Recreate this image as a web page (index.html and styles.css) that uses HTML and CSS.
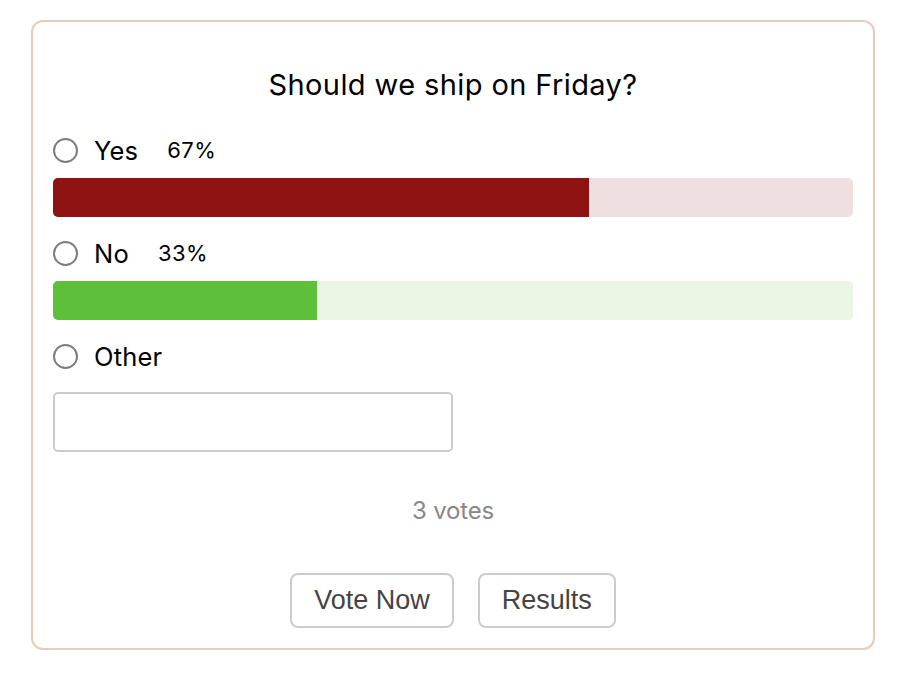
FILE: index.html
```html
<!DOCTYPE html>
<html lang="en">
<head>
<meta charset="utf-8">
<title>Poll</title>
<link rel="stylesheet" href="styles.css">
</head>
<body>
<div class="card">
  <h1 class="title">Should we ship on Friday?</h1>
  <div class="option">
    <span class="radio"></span>
    <span class="label">Yes</span>
    <span class="pct">67%</span>
  </div>
  <div class="bar bar-red"><div class="fill" style="width:67%"></div></div>
  <div class="option">
    <span class="radio"></span>
    <span class="label">No</span>
    <span class="pct">33%</span>
  </div>
  <div class="bar bar-green"><div class="fill" style="width:33%"></div></div>
  <div class="option">
    <span class="radio"></span>
    <span class="label">Other</span>
  </div>
  <input class="other-input" type="text">
  <div class="votes">3 votes</div>
  <div class="actions">
    <button class="btn">Vote Now</button>
    <button class="btn">Results</button>
  </div>
</div>
</body>
</html>
```
FILE: styles.css
```css
html, body {
  margin: 0;
  padding: 0;
  background: #ffffff;
}
body {
  font-family: Inter, "Noto Sans", sans-serif;
  color: #000;
}
.card {
  box-sizing: border-box;
  width: 844px;
  margin: 20px 0 0 31px;
  border: 2px solid #e6cdb8;
  border-radius: 12px;
  padding: 45px 20px 20px 20px;
  display: flex;
  flex-direction: column;
}
.title {
  margin: 0;
  font-size: 29px;
  line-height: 36px;
  font-weight: 400;
  text-align: center;
  letter-spacing: 0.4px;
}
.option {
  display: flex;
  align-items: center;
  height: 32px;
  margin-top: 20px;
}
.title + .option {
  margin-top: 31px;
}
.radio {
  box-sizing: border-box;
  width: 25px;
  height: 25px;
  border: 2px solid #7d7d7d;
  border-radius: 50%;
  flex: none;
}
.label {
  margin-left: 16px;
  font-size: 25.5px;
  letter-spacing: 0.2px;
}
.pct {
  margin-left: 29px;
  font-size: 22px;
  letter-spacing: 0.4px;
}
.bar {
  height: 39px;
  margin-top: 12px;
  border-radius: 5px;
  overflow: hidden;
  display: flex;
}
.fill {
  height: 100%;
}
.bar-red {
  background: #efdfe0;
}
.bar-red .fill {
  background: #8f1212;
}
.bar-green {
  background: #e9f6e4;
}
.bar-green .fill {
  background: #5ec03a;
}
.other-input {
  box-sizing: border-box;
  width: 400px;
  height: 60px;
  margin: 20px 0 0 0;
  border: 2px solid #cccccc;
  border-radius: 5px;
  background: #fff;
  font-size: 20px;
  padding: 0 10px;
}
.votes {
  margin-top: 44px;
  text-align: center;
  font-size: 24px;
  line-height: 30px;
  color: #888888;
  letter-spacing: -0.2px;
}
.actions {
  margin-top: 47px;
  display: flex;
  justify-content: center;
  gap: 24px;
}
.btn {
  box-sizing: border-box;
  height: 55px;
  padding: 0 22px;
  border: 2px solid #cccccc;
  border-radius: 8px;
  background: #fff;
  font-family: "Liberation Sans", Arial, sans-serif;
  font-size: 27px;
  color: #444444;
}
```
